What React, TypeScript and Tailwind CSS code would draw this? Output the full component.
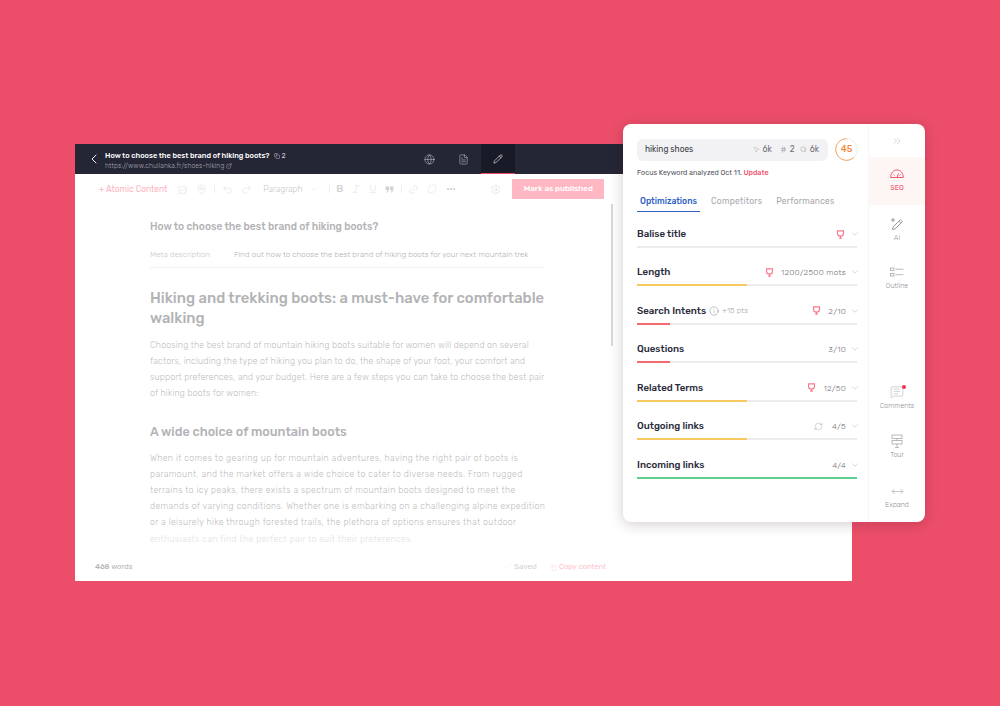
import {
  AlarmClockCheck,
  Check,
  ChevronDown,
  ChevronLeft,
  ChevronsRight,
  Copy,
  ExternalLink,
  FileText,
  Globe,
  Hash,
  Info,
  Italic,
  Link2,
  MapPin,
  MessageSquareText,
  MousePointer2,
  MoveHorizontal,
  Pencil,
  Redo2,
  RefreshCw,
  Search,
  Settings,
  Underline,
  Undo2,
  Unlink,
} from 'lucide-react';

const font = { fontFamily: 'Rubik, Inter, "Noto Sans", sans-serif' };

function Trophy({ className = '' }: { className?: string }) {
  return (
    <svg viewBox="0 0 12 12" className={className} fill="none" stroke="currentColor" strokeWidth="1.5">
      <path d="M2 1.200h8v3c0 2.400-1.600 4-4 4s-4-1.600-4-4z" />
      <path d="M6 8.200v2.300M4.200 10.800h3.600" />
    </svg>
  );
}

function OutlineIcon() {
  return (
    <svg viewBox="0 0 14 10" className="w-[14px] h-[10px]" fill="none" stroke="#a9a9ae" strokeWidth="0.8">
      <rect x="0.500" y="1" width="3.500" height="2.500" />
      <rect x="0.500" y="6.500" width="3.500" height="2.500" />
      <path d="M5.500 2.200h8M5.500 7.700h8" />
    </svg>
  );
}

function SeoIcon() {
  return (
    <svg viewBox="0 0 14 10" className="w-[14px] h-[10px]" fill="none" stroke="#f2566f" strokeWidth="1">
      <path d="M0.700 8.500C0.700 4 3.500 1 7 1s6.300 3 6.300 7.500z" />
      <path d="M7 8.500L8.500 4.500M3.500 5.500l1 1M10.500 5.500l-1 1" />
    </svg>
  );
}

function AiIcon() {
  return (
    <svg viewBox="0 0 14 14" className="w-[14px] h-[14px]" fill="none" stroke="#8f8f95" strokeWidth="0.9">
      <path d="M2.500 12.500l0.600-2.600L10.300 2.700l2 2L5.100 11.900z" />
      <path d="M8.800 4.200l2 2" />
      <path d="M3 1v4M1 3h4" />
    </svg>
  );
}

function TourIcon() {
  return (
    <svg viewBox="0 0 12 14" className="w-[12px] h-[14px]" fill="none" stroke="#a9a9ae" strokeWidth="0.8">
      <rect x="1" y="1" width="10" height="3.500" />
      <rect x="1" y="6.500" width="10" height="3.500" />
      <path d="M6 4.500v2M6 10v3.500M4 13.500h4" />
    </svg>
  );
}

function QuoteIcon() {
  return (
    <svg viewBox="0 0 10 8" className="w-[9px] h-[7px] ml-[7px]" fill="currentColor">
      <path d="M0.500 0.500h4v3.500L3 7.500H1.500L2.500 4.500H0.500zM5.500 0.500h4v3.500L8 7.500H6.500L7.500 4.500H5.500z" />
    </svg>
  );
}

function Row({
  title,
  value,
  bar,
  barColor,
  trophy,
  extra,
  refresh,
}: {
  title: string;
  value?: string;
  bar: string;
  barColor: string;
  trophy?: boolean;
  extra?: boolean;
  refresh?: boolean;
}) {
  return (
    <div className="h-[38.5px] flex flex-col justify-end">
      <div className="flex items-center h-[14px] mb-[4.500px]">
        <span className="text-[9.700px] font-medium text-[#2a2b3a]">{title}</span>
        {extra && (
          <span className="flex items-center ml-[3px] text-[8px] font-light text-[#a9a9ae]">
            <Info size={10} strokeWidth={1.1} className="mr-[3px] text-[#77787f]" />
            +15 pts
          </span>
        )}
        <span className="ml-auto flex items-center">
          {trophy && <Trophy className={`w-[9px] h-[9px] text-[#f9788c] ${value ? 'mr-[7px]' : 'mr-[1px]'}`} />}
          {refresh && <RefreshCw size={9} strokeWidth={1.1} className="text-[#9a9a9f] mr-[9px]" />}
          {value && <span className="text-[8.200px] font-light text-[#6f7077] tracking-[0.25px]">{value}</span>}
          <ChevronDown size={10} strokeWidth={1.1} className="text-[#a9a9ae] ml-[4px] mr-[-3px]" />
        </span>
      </div>
      <div className="h-[2px] bg-[#ececec]">
        <div className={`h-full ${barColor} ${bar}`} />
      </div>
    </div>
  );
}

function RailItem({ label, icon, className = '' }: { label: string; icon: React.ReactNode; className?: string }) {
  return (
    <div className={`flex flex-col items-center ${className}`}>
      <div className="relative h-[14px] flex items-center justify-center">{icon}</div>
      <span className="text-[7px] font-light text-[#8f8f95] mt-[2px] leading-[10px]">{label}</span>
    </div>
  );
}

const para1 = [
  'Choosing the best brand of mountain hiking boots suitable for women will depend on several',
  'factors, including the type of hiking you plan to do, the shape of your foot, your comfort and',
  'support preferences, and your budget. Here are a few steps you can take to choose the best pair',
  'of hiking boots for women:',
];

const para2 = [
  'When it comes to gearing up for mountain adventures, having the right pair of boots is',
  'paramount, and the market offers a wide choice to cater to diverse needs. From rugged',
  'terrains to icy peaks, there exists a spectrum of mountain boots designed to meet the',
  'demands of varying conditions. Whether one is embarking on a challenging alpine expedition',
  'or a leisurely hike through forested trails, the plethora of options ensures that outdoor',
];

export default function App() {
  return (
    <div className="relative w-[1000px] h-[706px] bg-[#ec4e69] overflow-hidden pt-[144px] pl-[75px]" style={font}>
      {/* editor */}
      <div className="w-[777px] h-[437px] bg-white flex flex-col">
        <div className="h-[30px] shrink-0 bg-[#242535] flex items-center pl-[11px]">
          <ChevronLeft size={16} strokeWidth={1.4} className="text-white" />
          <div className="ml-[3px] w-[307px] pt-[3px]">
            <div className="flex items-center text-[7.400px] leading-[10px] font-medium text-white">
              How to choose the best brand of hiking boots?
              <Copy size={6} className="ml-[4px] text-[#b7b8c0]" />
              <span className="ml-[2px] font-normal text-[#c9cad0] text-[7px]">2</span>
            </div>
            <div className="flex items-center text-[6.700px] leading-[10px] text-[#a4a5af] font-light tracking-[0.1px]">
              https://www.chullanka.fr/shoes-hiking
              <ExternalLink size={6} className="ml-[2px]" />
            </div>
          </div>
          <div className="w-[34px] flex justify-center">
            <Globe size={11} strokeWidth={1.2} className="text-[#c3c4ca]" />
          </div>
          <div className="w-[35px] flex justify-center">
            <FileText size={11} strokeWidth={1.2} className="text-[#c3c4ca]" />
          </div>
          <div className="w-[34px] h-full bg-[#191a27] border-b-[1.500px] border-[#ec4e69] flex items-center justify-center">
            <Pencil size={10} strokeWidth={1.4} className="text-white" />
          </div>
        </div>

        <div className="h-[30px] shrink-0 flex items-center pl-[24px] text-[#d2d2d5]">
          <span className="text-[8.400px] text-[#fdb6c2] whitespace-nowrap">+ Atomic Content</span>
          <AlarmClockCheck size={11} strokeWidth={1} className="ml-[10px] shrink-0" />
          <MapPin size={11} strokeWidth={1} className="ml-[8px] shrink-0" />
          <span className="w-px h-[8px] bg-[#eeeeee] ml-[7px]" />
          <Undo2 size={11} strokeWidth={1} className="ml-[6.500px] shrink-0" />
          <Redo2 size={11} strokeWidth={1} className="ml-[8px] shrink-0" />
          <span className="ml-[11.500px] text-[8.400px] font-light text-[#c9c9cc]">Paragraph</span>
          <ChevronDown size={9} strokeWidth={1} className="ml-[7.500px] shrink-0" />
          <span className="w-px h-[8px] bg-[#eeeeee] ml-[10.500px]" />
          <span className="ml-[6px] text-[10px] font-medium leading-none w-[7px]">B</span>
          <Italic size={10} strokeWidth={1} className="ml-[8px] shrink-0" />
          <Underline size={10} strokeWidth={1} className="ml-[7px] shrink-0" />
          <QuoteIcon />
          <span className="w-px h-[8px] bg-[#eeeeee] ml-[7px]" />
          <Link2 size={11} strokeWidth={1} className="ml-[5.500px] -rotate-45 shrink-0" />
          <Unlink size={10} strokeWidth={1} className="ml-[8.500px] shrink-0" />
          <span className="ml-[10px] flex gap-[1px]">
            <span className="w-[2px] h-[2px] rounded-full bg-[#c9c9cc]" />
            <span className="w-[2px] h-[2px] rounded-full bg-[#c9c9cc]" />
            <span className="w-[2px] h-[2px] rounded-full bg-[#c9c9cc]" />
          </span>
          <Settings size={11} strokeWidth={1} className="ml-[34.500px] shrink-0" />
          <span className="ml-[11.500px] w-[92px] h-[20px] rounded-[1px] bg-[#ffb7c3] text-white text-[8px] font-medium flex items-center justify-center whitespace-nowrap">
            Mark as published
          </span>
        </div>

        <div className="relative flex-1 overflow-hidden">
          <div className="absolute left-[536px] top-[0px] w-[2px] h-[142px] bg-[#d9d9d9]" />
          <div className="pl-[75px] w-[470px] pt-[15px]">
            <div className="h-[16px] text-[10.250px] leading-[16px] font-medium text-[#b3b3b6] whitespace-nowrap">
              How to choose the best brand of hiking boots?
            </div>
            <div className="mt-[14px] h-[19px] border-b border-[#f1f1f1] flex text-[8px] font-light leading-[12px] text-[#c9c9cc]">
              <span className="w-[84px]">Meta description</span>
              <span className="text-[8px] text-[#b3b3b6] whitespace-nowrap">
                Find out how to choose the best brand of hiking boots for your next mountain trek
              </span>
            </div>
            <h1 className="mt-[20px] text-[14.800px] leading-[20px] font-medium text-[#b3b3b6]">
              <span className="block whitespace-nowrap">Hiking and trekking boots: a must-have for comfortable</span>
              <span className="block">walking</span>
            </h1>
            <div className="mt-[9px] text-[8.700px] font-light leading-[16px] text-[#bdbdc0] tracking-[0.19px]">
              {para1.map((l) => (
                <div key={l} className="whitespace-nowrap">
                  {l}
                </div>
              ))}
            </div>
            <h2 className="mt-[22px] text-[12.600px] leading-[18px] font-medium text-[#b3b3b6]">
              A wide choice of mountain boots
            </h2>
            <div className="mt-[8.500px] text-[8.700px] font-light leading-[16.200px] text-[#bdbdc0] tracking-[0.37px]">
              {para2.map((l) => (
                <div key={l} className="whitespace-nowrap">
                  {l}
                </div>
              ))}
              <div className="whitespace-nowrap text-[#e2e2e4]">enthusiasts can find the perfect pair to suit their preferences.</div>
            </div>
          </div>
          <div className="absolute left-0 right-0 bottom-0 h-[28px] bg-white flex items-center pl-[20px] text-[7.500px]">
            <span className="text-[#b3b3b6] w-[408px]">
              <span className="font-medium">468</span> words
            </span>
            <Check size={8} strokeWidth={1} className="text-[#d8d8da]" />
            <span className="ml-[3px] text-[#d2d2d5] w-[36px] text-[8px]">Saved</span>
            <Copy size={7} strokeWidth={1} className="text-[#fdc2cc]" />
            <span className="ml-[2px] text-[#fdc2cc]">Copy content</span>
          </div>
        </div>
      </div>

      {/* floating seo panel */}
      <div className="absolute left-[623px] top-[124px] w-[302px] h-[398px] bg-white rounded-[8px] shadow-[0_2px_14px_rgba(60,20,30,0.22)] flex overflow-hidden">
        <div className="w-[246px] shrink-0 pl-[14px] pr-[11px] pt-[14px] border-r border-[#f6f6f6]">
          <div className="flex items-center">
            <div className="w-[191px] shrink-0 h-[22px] rounded-[6px] bg-[#f2f2f4] flex items-center pl-[8px] pr-[9px] text-[8.300px] text-[#6f7077]">
              <span className="text-[#3a3b45]">hiking shoes</span>
              <MousePointer2 size={7} strokeWidth={1} className="ml-auto text-[#8a8a90]" />
              <span className="ml-[3px]">6k</span>
              <Hash size={7} strokeWidth={1.2} className="ml-[8px]" />
              <span className="ml-[3px]">2</span>
              <Search size={7} strokeWidth={1.1} className="ml-[5px]" />
              <span className="ml-[3px]">6k</span>
            </div>
            <div className="relative ml-[7px] w-[23px] h-[23px] shrink-0 rounded-full border border-[#eeeeee] flex items-center justify-center text-[9px] font-medium text-[#f58a3c]">
              <svg viewBox="0 0 23 23" className="absolute -inset-px w-[23px] h-[23px]" fill="none">
                <path d="M11.500 0.700A10.800 10.800 0 1 0 19 19.300" stroke="#f8a55e" strokeWidth="1" />
              </svg>
              45
            </div>
          </div>
          <div className="mt-[7px] text-[7.150px] leading-[10px] text-[#55565e]">
            Focus Keyword analyzed Oct 11. <span className="text-[#f2566f] font-medium">Update</span>
          </div>
          <div className="mt-[14px] flex text-[8.500px] font-medium h-[20px]">
            <span className="w-[63px] h-[20px] text-center leading-[18px] text-[#2f5fc4] border-b-[1.500px] border-[#2f5fc4]">
              Optimizations
            </span>
            <span className="ml-[11px] leading-[18px] text-[#a9a9ae] font-normal tracking-[0.2px]">Competitors</span>
            <span className="ml-[14px] leading-[18px] text-[#a9a9ae] font-normal tracking-[0.2px]">Performances</span>
          </div>
          <div className="mt-[-3px]">
            <Row title="Balise title" bar="w-0" barColor="bg-[#ececec]" trophy />
            <Row title="Length" value="1200/2500 mots" bar="w-1/2" barColor="bg-[#f6c85f]" trophy />
            <Row title="Search Intents" value="2/10" bar="w-[15%]" barColor="bg-[#f8686f]" trophy extra />
            <Row title="Questions" value="3/10" bar="w-[15%]" barColor="bg-[#f8686f]" />
            <Row title="Related Terms" value="12/50" bar="w-1/2" barColor="bg-[#f6c85f]" trophy />
            <Row title="Outgoing links" value="4/5" bar="w-1/2" barColor="bg-[#f6c85f]" refresh />
            <Row title="Incoming links" value="4/4" bar="w-full" barColor="bg-[#5fd08f]" />
          </div>
        </div>
        <div className="flex-1 flex flex-col">
          <div className="h-[33px] flex items-center justify-center">
            <ChevronsRight size={12} strokeWidth={1.1} className="text-[#b9b9bd]" />
          </div>
          <div className="h-[48px] bg-[#fef5f5] flex flex-col items-center justify-center">
            <SeoIcon />
            <span className="text-[7px] text-[#f2566f] mt-[4px] leading-[10px]">SEO</span>
          </div>
          <RailItem className="mt-[12px]" label="AI" icon={<AiIcon />} />
          <RailItem className="mt-[22px]" label="Outline" icon={<OutlineIcon />} />
          <RailItem
            className="mt-[94px]"
            label="Comments"
            icon={
              <>
                <MessageSquareText size={14} strokeWidth={0.9} className="text-[#a9a9ae]" />
                <span className="absolute -right-[2px] top-0 w-[4px] h-[4px] rounded-full bg-[#f2304f]" />
              </>
            }
          />
          <RailItem className="mt-[23px]" label="Tour" icon={<TourIcon />} />
          <RailItem className="mt-[24px]" label="Expand" icon={<MoveHorizontal size={13} strokeWidth={0.9} className="text-[#8f8f95]" />} />
        </div>
      </div>
    </div>
  );
}
